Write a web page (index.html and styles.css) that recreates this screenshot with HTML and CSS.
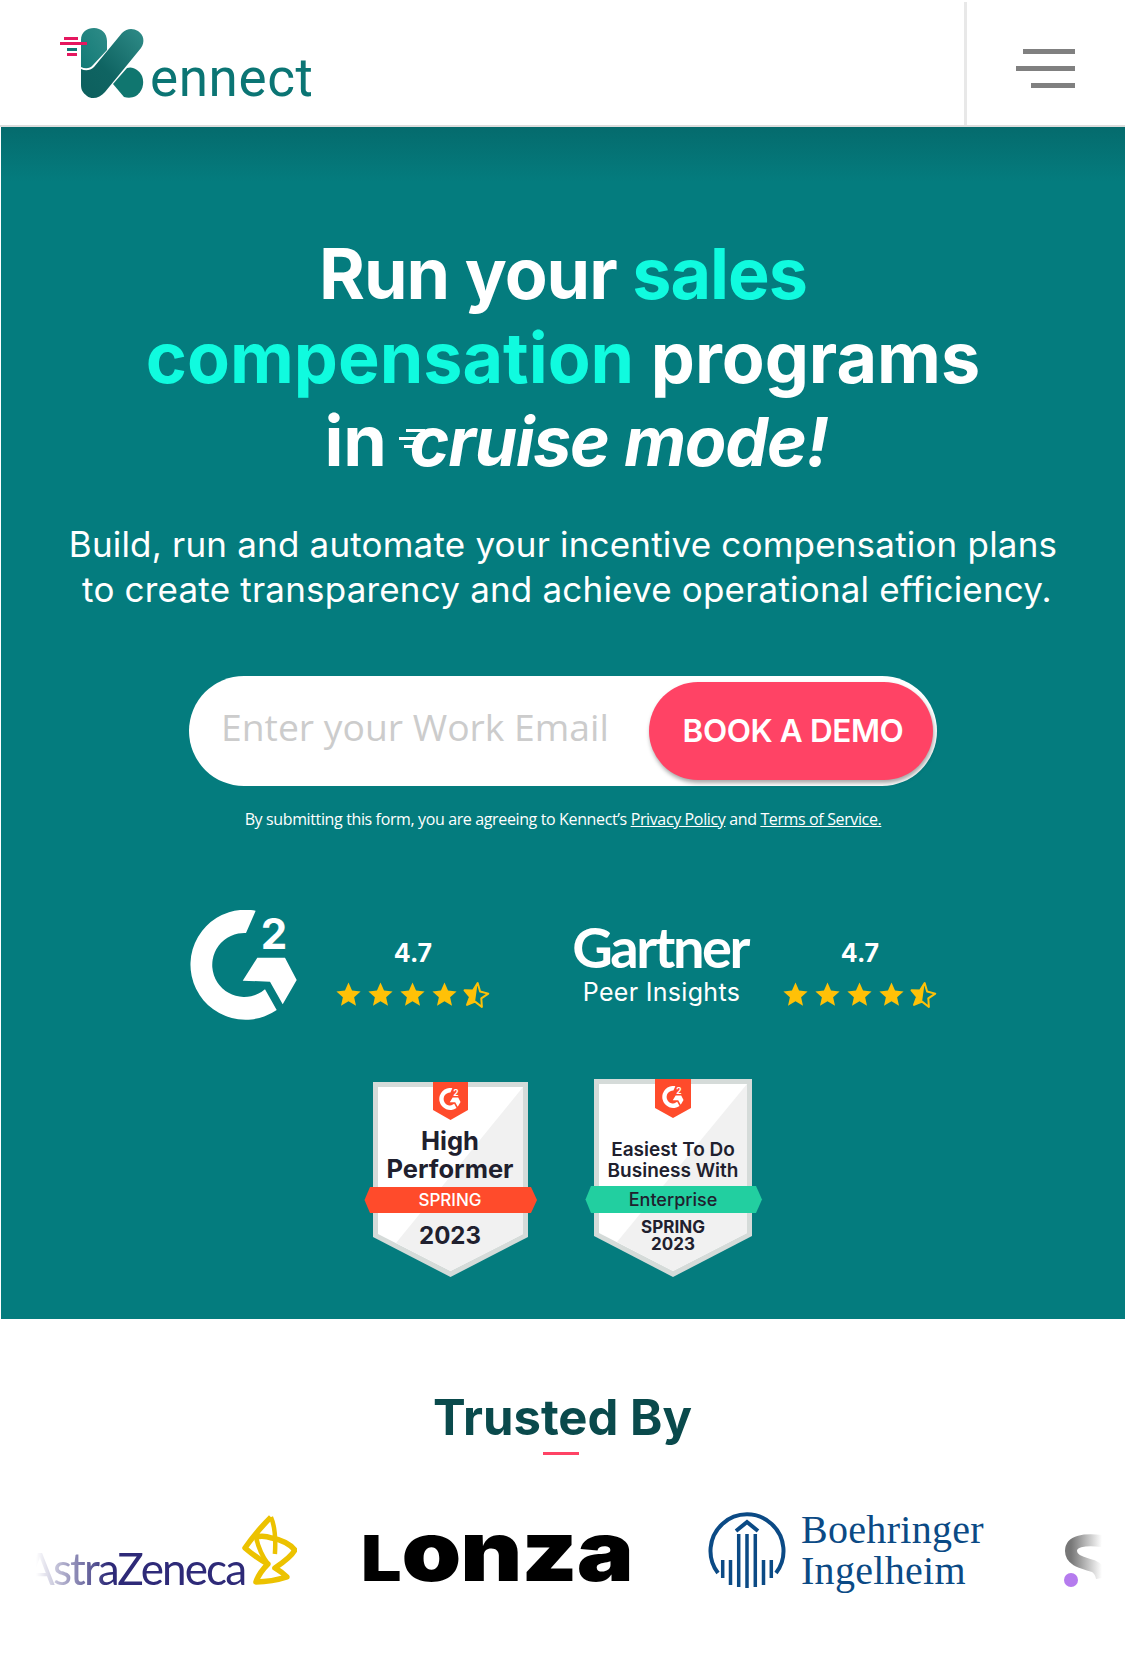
FILE: index.html
```html
<!DOCTYPE html>
<html>
<head>

	<meta charset="UTF-8">
	<title>Kennect</title>
	<meta name="viewport" content="width=device-width, initial-scale=1">

	<link rel="stylesheet" href="styles.css">

</head>
<body>

	<svg class="defs" width="0" height="0">
		<defs>
			<symbol id="star" viewBox="0 0 24 24">
				<polygon points="12,0.5 15.4,8.2 23.6,9 17.4,14.6 19.2,22.8 12,18.5 4.8,22.8 6.6,14.6 0.4,9 8.6,8.2" fill="#ffc107"/>
			</symbol>
			<symbol id="star-half" viewBox="0 0 28 28">
				<g transform="rotate(8 14 14)">
					<polygon points="14,2 17.6,10 26,10.9 19.7,16.6 21.5,25 14,20.7 6.5,25 8.3,16.6 2,10.9 10.4,10" fill="none" stroke="#ffc107" stroke-width="2" stroke-linejoin="round"/>
					<polygon points="14,2 10.4,10 2,10.9 8.3,16.6 6.5,25 14,20.7" fill="#ffc107"/>
				</g>
			</symbol>
			<symbol id="g2-mark" viewBox="20 20 108 110">
				<path d="M85.7 20.7A55 55 0 1 0 106.7 120L95 99.3A32 32 0 1 1 76 43Z" fill="#fff"/>
				<polygon points="87.3,67.7 115,67.7 126.7,90 112.7,114.3 100,91.7 72.7,90.7" fill="#fff"/>
				<text class="g2-two" x="104" y="59" text-anchor="middle">2</text>
			</symbol>
			<linearGradient id="k-light" x1="1" y1="0" x2="0" y2="1">
				<stop offset="0" stop-color="#2f8c88"/>
				<stop offset="1" stop-color="#127a76"/>
			</linearGradient>
			<linearGradient id="k-dark" x1="1" y1="0" x2="0" y2="1">
				<stop offset="0" stop-color="#2f8c88"/>
				<stop offset="0.6" stop-color="#0f6462"/>
				<stop offset="1" stop-color="#0d5f5d"/>
			</linearGradient>
			<linearGradient id="s-fade" x1="0" y1="0" x2="1" y2="0">
				<stop offset="0" stop-color="#777"/>
				<stop offset="1" stop-color="#fff"/>
			</linearGradient>
		</defs>
	</svg>

	<header class="top-bar">
		<a class="brand">
			<svg class="brand-mark" viewBox="55 24 92 78" width="92" height="78">
				<path d="M81 40C81 32 87 28 94 28 101 28 107 33 107 41V50L93 65C90 69 85 69 81 67Z" fill="url(#k-light)"/>
				<path d="M81 69C85 71 90 71 94 67L122 33C127 28 133 28 138 31 144 35 145 42 141 48L105 92C100 98 92 100 87 96 83 93 81 90 81 85Z" fill="url(#k-dark)"/>
				<path d="M113 84L127 68C133 66 139 70 142 76 145 84 142 92 136 96 132 98 128 98 124 97Z" fill="#10766f"/>
				<rect x="60" y="42" width="27" height="3" fill="#e5175f"/>
				<rect x="64" y="37" width="14" height="3" fill="#e5175f"/>
				<rect x="67" y="48" width="10" height="3" fill="#0f7a76"/>
				<rect x="67" y="53" width="10" height="3" fill="#e5175f"/>
			</svg>
			<span class="brand-name">ennect</span>
		</a>
		<div class="menu-cell">
			<span class="menu-line line-a"></span>
			<span class="menu-line line-b"></span>
			<span class="menu-line line-c"></span>
		</div>
	</header>

	<section class="hero">

		<h1>
			<span class="head-one">Run your <span class="accent">sales</span></span>
			<span class="head-two"><span class="accent">compensation</span> programs</span>
			<span class="head-three">in <em class="cruise"><svg class="speed" viewBox="0 0 26 22" width="26" height="22"><rect x="7" y="0" width="19" height="3"/><rect x="0" y="8" width="17" height="3"/><rect x="5" y="16" width="9" height="3"/></svg>cruise mode!</em></span>
		</h1>

		<p class="lead">
			<span class="lead-one">Build, run and automate your incentive compensation plans</span>
			<span class="lead-two">to create transparency and achieve operational efficiency.</span>
		</p>

		<form class="demo-form">
			<input class="email" type="text" placeholder="Enter your Work Email">
			<button class="demo-btn" type="button">BOOK A DEMO</button>
		</form>

		<p class="legal">By submitting this form, you are agreeing to Kennect’s <a>Privacy Policy</a> and <a>Terms of Service.</a></p>

		<div class="ratings">
			<svg class="g2-logo" width="108" height="110"><use href="#g2-mark"/></svg>
			<div class="score score-g2">
				<div class="score-num">4.7</div>
				<div class="stars">
					<svg class="star"><use href="#star"/></svg>
					<svg class="star"><use href="#star"/></svg>
					<svg class="star"><use href="#star"/></svg>
					<svg class="star"><use href="#star"/></svg>
					<svg class="star star-last"><use href="#star-half"/></svg>
				</div>
			</div>
			<div class="gartner">
				<div class="gartner-name">Gartner</div>
				<div class="gartner-sub">Peer Insights</div>
			</div>
			<div class="score score-gartner">
				<div class="score-num">4.7</div>
				<div class="stars">
					<svg class="star"><use href="#star"/></svg>
					<svg class="star"><use href="#star"/></svg>
					<svg class="star"><use href="#star"/></svg>
					<svg class="star"><use href="#star"/></svg>
					<svg class="star star-last"><use href="#star-half"/></svg>
				</div>
			</div>
		</div>

		<div class="badges">
			<svg class="badge-one" viewBox="0 0 175 198" width="175" height="198">
				<polygon points="9,2 164,2 164,157 86.500,197 9,157" fill="#d5dbd9"/>
				<polygon points="14,7 159,7 159,154 86.500,191 14,154" fill="#fff"/>
				<polygon points="159,7 159,154 86.500,191 32,163 159,7" fill="#f1f1f1"/>
				<polygon points="69,2 104,2 104,30 86.500,40 69,30" fill="#ff4b2b"/>
				<use href="#g2-mark" x="75" y="8" width="22" height="22"/>
				<polygon points="6,107 167,107 173,120 167,133 6,133 0.500,120" fill="#ff4b2b"/>
				<text class="badge-big" x="86" y="70" text-anchor="middle">High</text>
				<text class="badge-big" x="86" y="98" text-anchor="middle">Performer</text>
				<text class="badge-spring" x="86" y="126" text-anchor="middle">SPRING</text>
				<text class="badge-year" x="86" y="164" text-anchor="middle">2023</text>
			</svg>
			<svg class="badge-two" viewBox="0 0 178 200" width="178" height="200">
				<polygon points="9,2 167,2 167,159 88,200 9,159" fill="#d5dbd9"/>
				<polygon points="14,7 162,7 162,156 88,194 14,156" fill="#fff"/>
				<polygon points="162,7 162,156 88,194 32,165" fill="#f1f1f1"/>
				<polygon points="70,2 106,2 106,31 88,41 70,31" fill="#ff4b2b"/>
				<use href="#g2-mark" x="77" y="9" width="22" height="22"/>
				<polygon points="6,109 171,109 177,122.500 171,136 6,136 0.500,122.500" fill="#22cfa0"/>
				<text class="badge-mid" x="88" y="79" text-anchor="middle">Easiest To Do</text>
				<text class="badge-mid" x="88" y="100" text-anchor="middle">Business With</text>
				<text class="badge-ent" x="88" y="129" text-anchor="middle">Enterprise</text>
				<text class="badge-small" x="88" y="156" text-anchor="middle">SPRING</text>
				<text class="badge-small" x="88" y="173" text-anchor="middle">2023</text>
			</svg>
		</div>

	</section>

	<section class="trusted">

		<h2>Trusted By</h2>
		<div class="title-rule"></div>

		<div class="logo-row">
			<div class="logo-astra">
				<span class="astra-name">AstraZeneca</span>
				<svg class="astra-mark" viewBox="0 0 55 72" width="58" height="76">
					<path d="M29 3C20 12 10 24 3 34 10 40 18 46 26 50 20 56 16 62 14 68 24 68 36 66 45 63 42 60 38 57 33 54 42 48 50 42 53 36 48 30 40 26 30 24 24 22 18 22 14 23" fill="none" stroke="#ecc200" stroke-width="5.500" stroke-linejoin="round"/>
					<path d="M29 3C33 12 34 24 33 40M14 23C16 32 20 42 26 50" fill="none" stroke="#ecc200" stroke-width="4.500"/>
				</svg>
			</div>
			<div class="logo-lonza">L<span class="lonza-rest">onza</span></div>
			<div class="logo-bi">
				<svg class="bi-mark" viewBox="0 0 78 78" width="78" height="78">
					<path d="M10 62A36.500 36.500 0 1 1 68 62" fill="none" stroke="#0b4a85" stroke-width="4"/>
					<path d="M28 20L39 11 50 20" fill="none" stroke="#0b4a85" stroke-width="4"/>
					<path d="M30.700 23V76M39 23V77M47.300 23V76M22.500 49V74M55.500 49V74M14.700 49V67M63.300 49V67" fill="none" stroke="#0b4a85" stroke-width="3.500"/>
				</svg>
				<div class="bi-name">Boehringer<br>Ingelheim</div>
			</div>
			<svg class="logo-s" viewBox="0 0 38 54" width="38" height="54">
				<path d="M38 7C20 5 7 7 7 17 7 27 20 29 29 32 34 34 37 38 38 44" fill="none" stroke="url(#s-fade)" stroke-width="12"/>
				<circle cx="7" cy="46" r="7" fill="#b57bee"/>
			</svg>
		</div>

	</section>

</body>
</html>
```

FILE: styles.css
```css
html {
	box-sizing: border-box;
}

*,
*:before,
*:after {
	box-sizing: inherit;
}

body {
	margin: 0;
	background: #fff;
	font-family: Inter, "Open Sans", sans-serif;
	color: #fff;
}

.defs {
	display: block;
	height: 0;
}

.top-bar {
	display: flex;
	justify-content: space-between;
	height: 127px;
	padding-top: 2px;
	border-bottom: 2px solid #ddd;
}

.brand {
	display: flex;
	align-items: flex-start;
	padding: 22px 0 0 55px;
}

.brand-name {
	margin: 22px 0 0 3px;
	font-family: Roboto, sans-serif;
	font-size: 53px;
	line-height: 64px;
	letter-spacing: .6px;
	color: #0b7574;
}

.menu-cell {
	display: flex;
	flex-direction: column;
	align-items: flex-end;
	gap: 12px;
	width: 161px;
	padding: 47px 50px 0 0;
	border-left: 3px solid #e8e8e8;
}

.menu-line {
	display: block;
	height: 5px;
	background: #808080;
}

.line-a { width: 52px; }
.line-b { width: 59px; }
.line-c { width: 44px; }

.hero {
	height: 1192px;
	padding-top: 105px;
	background: linear-gradient(#056b6d, #047c7e 55px);
	border-left: 1px solid #fff;
	text-align: center;
}

h1 {
	margin: 0;
	font-size: 70px;
	line-height: 83.500px;
	font-weight: 700;
}

.head-one,
.head-two,
.head-three {
	display: block;
}

.head-one {
	letter-spacing: -1px;
}

.head-three {
	padding-left: 26px;
}

.accent {
	color: #10fbdf;
}

.cruise {
	position: relative;
	margin-left: 6px;
	font-size: 68px;
	font-style: italic;
	letter-spacing: -1.200px;
}

.speed {
	position: absolute;
	left: -11px;
	top: 29px;
	fill: #fff;
}

.lead {
	margin: 38px 0 0;
	font-size: 35px;
	line-height: 45px;
	letter-spacing: .19px;
}

.lead-one,
.lead-two {
	display: block;
}

.lead-two {
	padding-left: 8px;
}

.demo-form {
	display: flex;
	justify-content: space-between;
	align-items: center;
	width: 748px;
	height: 110px;
	margin: 64px 0 0 188px;
	padding: 0 4px 0 32px;
	background: #fff;
	border-radius: 55px;
}

.email {
	width: 400px;
	margin-bottom: 8px;
	padding: 0;
	border: 0;
	outline: 0;
	background: none;
	font-family: "Open Sans", sans-serif;
	font-size: 37.300px;
}

.email::placeholder {
	color: #ccc;
}

.demo-btn {
	width: 284px;
	height: 98px;
	padding: 0 0 0 4px;
	border: 0;
	border-radius: 49px;
	background: #ff4365;
	box-shadow: 1px 3px 4px rgba(0, 0, 0, .35);
	color: #fff;
	font-family: Inter, sans-serif;
	font-size: 31.500px;
	font-weight: 600;
	letter-spacing: -.4px;
}

.legal {
	margin: 23px 0 0;
	font-family: "Open Sans", sans-serif;
	font-size: 16px;
	line-height: 20px;
	letter-spacing: -.37px;
}

.legal a {
	text-decoration: underline;
}

.ratings {
	display: flex;
	margin-top: 81px;
	padding-left: 189px;
}

.g2-logo {
	flex: none;
	overflow: visible;
}

.g2-two {
	font-size: 42px;
	font-weight: 700;
	fill: #fff;
}

.score {
	width: 154px;
	padding-top: 29px;
}

.score-g2 {
	margin-left: 38px;
}

.score-gartner {
	margin-left: 34px;
}

.score-num {
	font-size: 25px;
	line-height: 28px;
	font-weight: 700;
}

.stars {
	display: flex;
	align-items: center;
	gap: 7px;
	margin-top: 14px;
}

.star {
	width: 25px;
	height: 25px;
}

.star-last {
	width: 28px;
	height: 28px;
	margin-left: -2px;
}

.gartner {
	width: 178px;
	margin-left: 81px;
	padding-top: 7px;
}

.gartner-name {
	font-family: Lato, sans-serif;
	font-size: 56px;
	line-height: 60px;
	font-weight: 700;
	letter-spacing: -2.500px;
}

.gartner-sub {
	margin: 0 0 0 3px;
	font-size: 25px;
	line-height: 30px;
	letter-spacing: .3px;
	white-space: nowrap;
}

.badges {
	display: flex;
	justify-content: flex-start;
	gap: 46px;
	margin-top: 57px;
	padding-left: 363px;
}

.badge-one {
	margin-top: 3px;
}

.badge-big {
	font-size: 25.500px;
	font-weight: 700;
	fill: #20202e;
}

.badge-year {
	font-size: 24px;
	font-weight: 700;
	fill: #20202e;
}

.badge-mid {
	font-size: 19px;
	font-weight: 600;
	fill: #20202e;
}

.badge-small {
	font-size: 17px;
	font-weight: 700;
	fill: #20202e;
}

.badge-ent {
	font-size: 18px;
	font-weight: 500;
	fill: #20202e;
}

.badge-spring {
	font-size: 17px;
	font-weight: 500;
	fill: #fff;
}

.trusted {
	padding-top: 66px;
	height: 353px;
	text-align: center;
}

h2 {
	margin: 0;
	font-size: 49px;
	line-height: 66px;
	font-weight: 700;
	color: #0a4a4c;
}

.title-rule {
	width: 36px;
	height: 3px;
	margin: 1px 0 0 543px;
	background: #ff4365;
}

.logo-row {
	display: flex;
	align-items: center;
	height: 80px;
	margin-top: 55px;
	padding-left: 25px;
	text-align: left;
}

.logo-astra {
	display: flex;
	align-items: flex-end;
	width: 272px;
}

.astra-name {
	margin: 0 -3px -2px 0;
	font-family: Lato, sans-serif;
	font-size: 44px;
	line-height: 44px;
	letter-spacing: -1.900px;
	color: #2e2a78;
	-webkit-mask-image: linear-gradient(90deg, transparent 5%, #000 38%);
	mask-image: linear-gradient(90deg, transparent 5%, #000 38%);
}

.logo-lonza {
	width: 267px;
	margin: 8px 0 0 64px;
	font-size: 63px;
	line-height: 66px;
	font-weight: 900;
	color: #000;
	white-space: nowrap;
	transform: scaleX(1.14);
	transform-origin: left center;
}

.lonza-rest {
	font-size: 84px;
	line-height: 66px;
	letter-spacing: -1px;
}

.logo-bi {
	display: flex;
	align-items: center;
	gap: 15px;
	margin-left: 80px;
}

.bi-name {
	font-family: "Liberation Serif", serif;
	font-size: 40px;
	line-height: 41px;
	letter-spacing: .3px;
	color: #0b4a85;
}

.logo-s {
	margin: 22px 0 0 80px;
}
```
